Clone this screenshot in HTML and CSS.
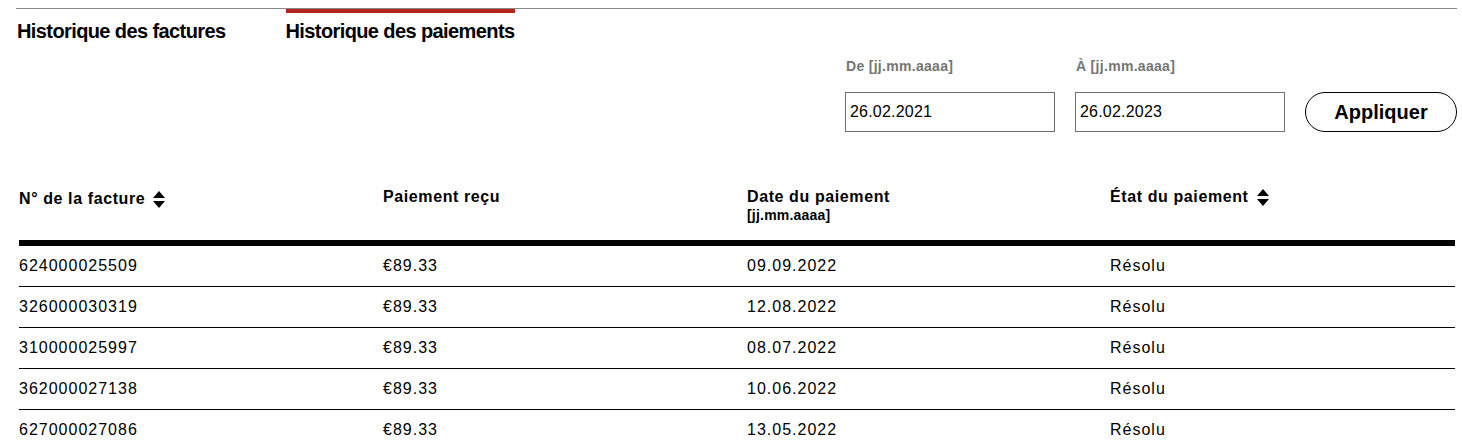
FILE: index.html
```html
<!DOCTYPE html>
<html lang="fr">
<head>
<meta charset="utf-8">
<title>Historique des paiements</title>
<link rel="stylesheet" href="styles.css">
</head>
<body>
<div class="page">
  <nav class="tabs">
    <div class="tab">Historique des factures</div>
    <div class="tab active">Historique des paiements</div>
  </nav>

  <div class="filters">
    <div class="field">
      <label class="field-label" for="from">De [jj.mm.aaaa]</label>
      <input class="field-input" id="from" type="text" value="26.02.2021">
    </div>
    <div class="field">
      <label class="field-label" for="to">À [jj.mm.aaaa]</label>
      <input class="field-input" id="to" type="text" value="26.02.2023">
    </div>
    <button class="apply" type="button">Appliquer</button>
  </div>

  <div class="table">
    <div class="thead">
      <div class="th th-sort">N° de la facture
        <svg class="sort" viewBox="0 0 12 17" width="12" height="17"><path d="M6 0 L12 7 L0 7 Z M0 10 L12 10 L6 17 Z" fill="#000"/></svg>
      </div>
      <div class="th">Paiement reçu</div>
      <div class="th">Date du paiement<span class="th-sub">[jj.mm.aaaa]</span></div>
      <div class="th th-sort th-state">État du paiement
        <svg class="sort" viewBox="0 0 12 17" width="12" height="17"><path d="M6 0 L12 7 L0 7 Z M0 10 L12 10 L6 17 Z" fill="#000"/></svg>
      </div>
    </div>
    <div class="tr"><div class="td">624000025509</div><div class="td">€89.33</div><div class="td">09.09.2022</div><div class="td">Résolu</div></div>
    <div class="tr"><div class="td">326000030319</div><div class="td">€89.33</div><div class="td">12.08.2022</div><div class="td">Résolu</div></div>
    <div class="tr"><div class="td">310000025997</div><div class="td">€89.33</div><div class="td">08.07.2022</div><div class="td">Résolu</div></div>
    <div class="tr"><div class="td">362000027138</div><div class="td">€89.33</div><div class="td">10.06.2022</div><div class="td">Résolu</div></div>
    <div class="tr"><div class="td">627000027086</div><div class="td">€89.33</div><div class="td">13.05.2022</div><div class="td">Résolu</div></div>
  </div>
</div>
</body>
</html>
```

FILE: styles.css
```css
* { box-sizing: border-box; }

html, body {
  margin: 0;
  padding: 0;
  background: #fff;
  color: #000;
  font-family: "Liberation Sans", Arial, sans-serif;
}

.page {
  padding: 8px 5px 0 16px;
}

.tabs {
  display: flex;
  gap: 60px;
  border-top: 1px solid #8a8a8a;
}

.tab {
  border-top: 4px solid transparent;
  padding-top: 6px;
  font-size: 20px;
  line-height: 24px;
  font-weight: 700;
  letter-spacing: -0.6px;
  padding-left: 1px;
}

.tab.active {
  border-top-color: #b5241b;
  padding-left: 0;
}

.filters {
  display: flex;
  justify-content: flex-end;
  align-items: flex-end;
  gap: 20px;
  margin-top: 14px;
}

.field {
  display: flex;
  flex-direction: column;
  width: 210px;
}

.field-label {
  font-size: 14px;
  line-height: 18px;
  font-weight: 700;
  color: #747676;
  letter-spacing: 0.3px;
  padding-left: 1px;
  margin-bottom: 17px;
}

.field-input {
  width: 210px;
  height: 40px;
  border: 1px solid #6f7171;
  border-radius: 0;
  padding: 0 4px;
  font-family: "Liberation Sans", Arial, sans-serif;
  font-size: 16px;
  letter-spacing: 0.2px;
  color: #000;
  background: #fff;
  outline: none;
}

.apply {
  width: 152px;
  height: 40px;
  border: 1px solid #000;
  border-radius: 20px;
  background: #fff;
  color: #000;
  font-family: "Liberation Sans", Arial, sans-serif;
  font-size: 20px;
  font-weight: 700;
  padding: 0;
  cursor: pointer;
}

.table {
  margin: 55px 2px 0 3px;
}

.thead,
.tr {
  display: grid;
  grid-template-columns: 364px 364px 363px 1fr;
}

.thead {
  align-items: start;
  padding-bottom: 17px;
  border-bottom: 6px solid #000;
}

.th {
  font-size: 16px;
  line-height: 20px;
  font-weight: 700;
  letter-spacing: 0.6px;
  display: flex;
  flex-direction: column;
}

.th-sort {
  flex-direction: row;
  align-items: center;
  height: 24px;
}

.th-state {
  margin-top: -2px;
}

.th-sub {
  font-size: 14px;
  line-height: 16px;
  letter-spacing: 0.2px;
}

.sort {
  display: block;
  margin-left: 8px;
}

.tr {
  height: 41px;
  align-items: center;
  border-bottom: 1px solid #000;
}

.td {
  font-size: 16px;
  letter-spacing: 1px;
  line-height: 20px;
}
```
